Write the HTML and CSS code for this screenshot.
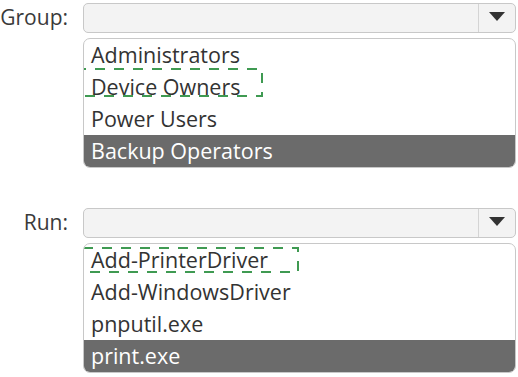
FILE: index.html
```html
<html>
  <head>
    <title>Group and Run</title>
    <link rel="stylesheet" href="styles.css">
  </head>
  <body>
    <div class="field">
      <div class="label">Group:</div>
      <div class="control">
        <div class="combo"><div class="combo-text"></div><div class="combo-btn"><span class="arrow"></span></div></div>
        <div class="list">
          <div class="item">Administrators</div>
          <div class="item"><span class="mark mark-group">Device Owners<svg class="dash" preserveAspectRatio="none"><rect x="1" y="1" width="100%" height="100%" /></svg></span></div>
          <div class="item">Power Users</div>
          <div class="item sel">Backup Operators</div>
        </div>
      </div>
    </div>
    <div class="field second">
      <div class="label">Run:</div>
      <div class="control">
        <div class="combo"><div class="combo-text"></div><div class="combo-btn"><span class="arrow"></span></div></div>
        <div class="list">
          <div class="item"><span class="mark mark-run">Add-PrinterDriver<svg class="dash" preserveAspectRatio="none"><rect x="1" y="1" width="100%" height="100%" /></svg></span></div>
          <div class="item">Add-WindowsDriver</div>
          <div class="item">pnputil.exe</div>
          <div class="item sel">print.exe</div>
        </div>
      </div>
    </div>
  </body>
</html>
```

FILE: styles.css
```css
body {
  margin: 0;
  background: #ffffff;
  font-family: "Open Sans", "Noto Sans", sans-serif;
  color: #333333;
}
.field {
  display: flex;
  padding-top: 3px;
}
.field.second {
  padding-top: 40px;
}
.label {
  width: 68px;
  font-size: 21px;
  line-height: 28px;
  text-align: right;
  color: #3a3a3a;
  white-space: nowrap;
}
.control {
  margin-left: 15px;
  width: 433px;
}
.combo {
  display: flex;
  height: 28px;
  border: 1px solid #c8c8c8;
  border-radius: 5px;
  background: #f3f3f3;
}
.combo-text {
  flex: 1;
}
.combo-btn {
  width: 36px;
  border-left: 1px solid #d4d4d4;
  display: flex;
  align-items: center;
  justify-content: center;
}
.arrow {
  width: 0;
  height: 0;
  border-left: 8px solid transparent;
  border-right: 8px solid transparent;
  border-top: 9px solid #333333;
  margin-bottom: 3px;
}
.list {
  margin-top: 5px;
  border: 1px solid #c8c8c8;
  border-radius: 7px;
  overflow: hidden;
  background: #ffffff;
}
.item {
  height: 32px;
  line-height: 32px;
  padding-left: 7px;
  font-size: 21.5px;
  white-space: nowrap;
}
.item.sel {
  background: #6b6b6b;
  color: #ffffff;
}
.mark {
  position: relative;
  display: inline-block;
  vertical-align: top;
}
.dash {
  position: absolute;
  overflow: visible;
  fill: none;
  stroke: #3f9a52;
  stroke-width: 2;
  stroke-dasharray: 10 9;
}
.mark-group .dash {
  left: -16px;
  top: -3px;
  width: 186px;
  height: 27px;
}
.mark-run .dash {
  left: -9px;
  top: 3px;
  width: 215px;
  height: 24px;
}
```
